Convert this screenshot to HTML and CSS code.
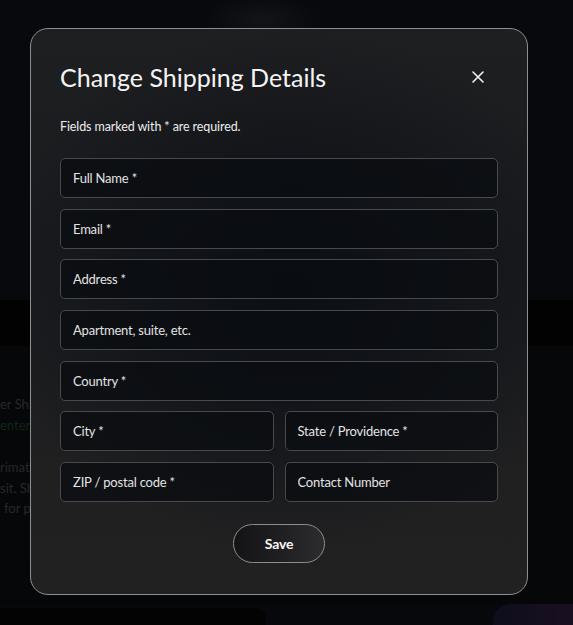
FILE: index.html
```html
<!DOCTYPE html>
<html lang="en">
<head>
<meta charset="utf-8">
<title>Change Shipping Details</title>
<link rel="stylesheet" href="styles.css">
</head>
<body>
<div class="page">
  <div class="page-top"></div>
  <div class="page-band"></div>
  <div class="page-content">
    <p class="ghost l1">er Shipping</p>
    <p class="ghost green l2">enter</p>
    <p class="ghost l3">rimated</p>
    <p class="ghost l4">sit. Shipping</p>
    <p class="ghost l5">for processing</p>
  </div>
  <div class="page-bottom">
    <div class="bottom-left"></div>
    <div class="bottom-right"></div>
  </div>
</div>

<div class="modal" role="dialog" aria-labelledby="modal-title">
  <div class="modal-head">
    <h2 id="modal-title" class="modal-title">Change Shipping Details</h2>
    <button class="close" aria-label="Close">
      <svg width="12" height="12" viewBox="0 0 12 12"><path d="M1 1L11 11M11 1L1 11" stroke="#f2f2f2" stroke-width="1.6" stroke-linecap="round"/></svg>
    </button>
  </div>
  <p class="note">Fields marked with * are required.</p>
  <form class="form">
    <input class="field" type="text" placeholder="Full Name *">
    <input class="field" type="email" placeholder="Email *">
    <input class="field" type="text" placeholder="Address *">
    <input class="field" type="text" placeholder="Apartment, suite, etc.">
    <input class="field" type="text" placeholder="Country *">
    <div class="row">
      <input class="field" type="text" placeholder="City *">
      <input class="field" type="text" placeholder="State / Providence *">
    </div>
    <div class="row">
      <input class="field" type="text" placeholder="ZIP / postal code *">
      <input class="field" type="tel" placeholder="Contact Number">
    </div>
    <div class="actions">
      <button type="button" class="save">Save</button>
    </div>
  </form>
</div>
</body>
</html>
```

FILE: styles.css
```css
* { box-sizing: border-box; }
html, body {
  margin: 0;
  padding: 0;
}
body {
  width: 573px;
  height: 625px;
  overflow: hidden;
  background: #07080b;
  font-family: Lato, "Open Sans", sans-serif;
  position: relative;
}
.page {
  display: flex;
  flex-direction: column;
  height: 625px;
}
.page-top {
  height: 300px;
  background: radial-gradient(ellipse 60px 26px at 262px 20px, #131418 0%, rgba(19,20,24,0) 100%), #08090c;
}
.page-band {
  height: 46px;
  background: #020203;
}
.page-content {
  flex: 1;
  background: #060709;
  padding-top: 48px;
}
.ghost {
  margin: 0;
  font-size: 13px;
  line-height: 20.5px;
  color: #26272a;
  white-space: nowrap;
}
.ghost.green { color: #132513; }
.ghost.l3 { margin-top: 22px; }
.ghost.l5 { margin-left: 4px; }
.page-bottom {
  height: 21px;
  display: flex;
  justify-content: space-between;
  align-items: flex-end;
}
.bottom-left {
  width: 266px;
  height: 17px;
  background: #030304;
  border-top-right-radius: 10px;
}
.bottom-right {
  width: 80px;
  height: 21px;
  border-top-left-radius: 18px;
  background: linear-gradient(90deg, #0e0e1c, #1a0f20);
}

.modal {
  position: absolute;
  left: 30px;
  top: 28px;
  width: 498px;
  height: 567px;
  border: 1px solid #8f8f91;
  border-radius: 18px;
  padding: 33px 29px 30px 29px;
  background:
    radial-gradient(ellipse 300px 260px at 260px 260px, rgba(10,14,22,0.95) 0%, rgba(14,17,23,0.7) 45%, rgba(30,30,32,0) 100%),
    linear-gradient(180deg, #1e1f21 0%, #1a1b1e 40%, #202021 80%, #212121 100%);
  color: #f2f2f2;
}
.modal-head {
  display: flex;
  justify-content: space-between;
  align-items: center;
  height: 30px;
}
.modal-title {
  margin: 0;
  font-size: 25px;
  font-weight: 400;
  line-height: 30px;
  letter-spacing: 0;
  color: #f5f5f5;
}
.close {
  background: none;
  border: 0;
  padding: 0;
  margin-right: 14px;
  width: 12px;
  height: 12px;
  display: flex;
  cursor: pointer;
}
.note {
  margin: 27px 0 0 0;
  font-size: 12.5px;
  line-height: 16px;
  letter-spacing: -0.1px;
  color: #ededed;
}
.form {
  margin-top: 23px;
  display: flex;
  flex-direction: column;
  gap: 10.67px;
}
.row {
  display: grid;
  grid-template-columns: 1fr 1fr;
  gap: 11px;
}
.field {
  width: 100%;
  height: 40px;
  border: 1px solid #46494e;
  border-radius: 5px;
  background: rgba(10,12,16,0.75);
  padding: 0 12px;
  font-family: inherit;
  font-size: 13px;
  letter-spacing: -0.2px;
  color: #e8e8e8;
  outline: none;
}
.field::placeholder {
  color: #e3e3e3;
  opacity: 1;
}
.actions {
  display: flex;
  justify-content: center;
  margin-top: 11px;
}
.save {
  width: 92px;
  height: 39px;
  border-radius: 20px;
  border: 1px solid #8d8d8f;
  background: linear-gradient(90deg, #141416 0%, #1f1f21 50%, #2c2c2e 100%);
  color: #f5f5f5;
  font-family: inherit;
  font-size: 14px;
  font-weight: 700;
  letter-spacing: -0.2px;
  cursor: pointer;
}
```
